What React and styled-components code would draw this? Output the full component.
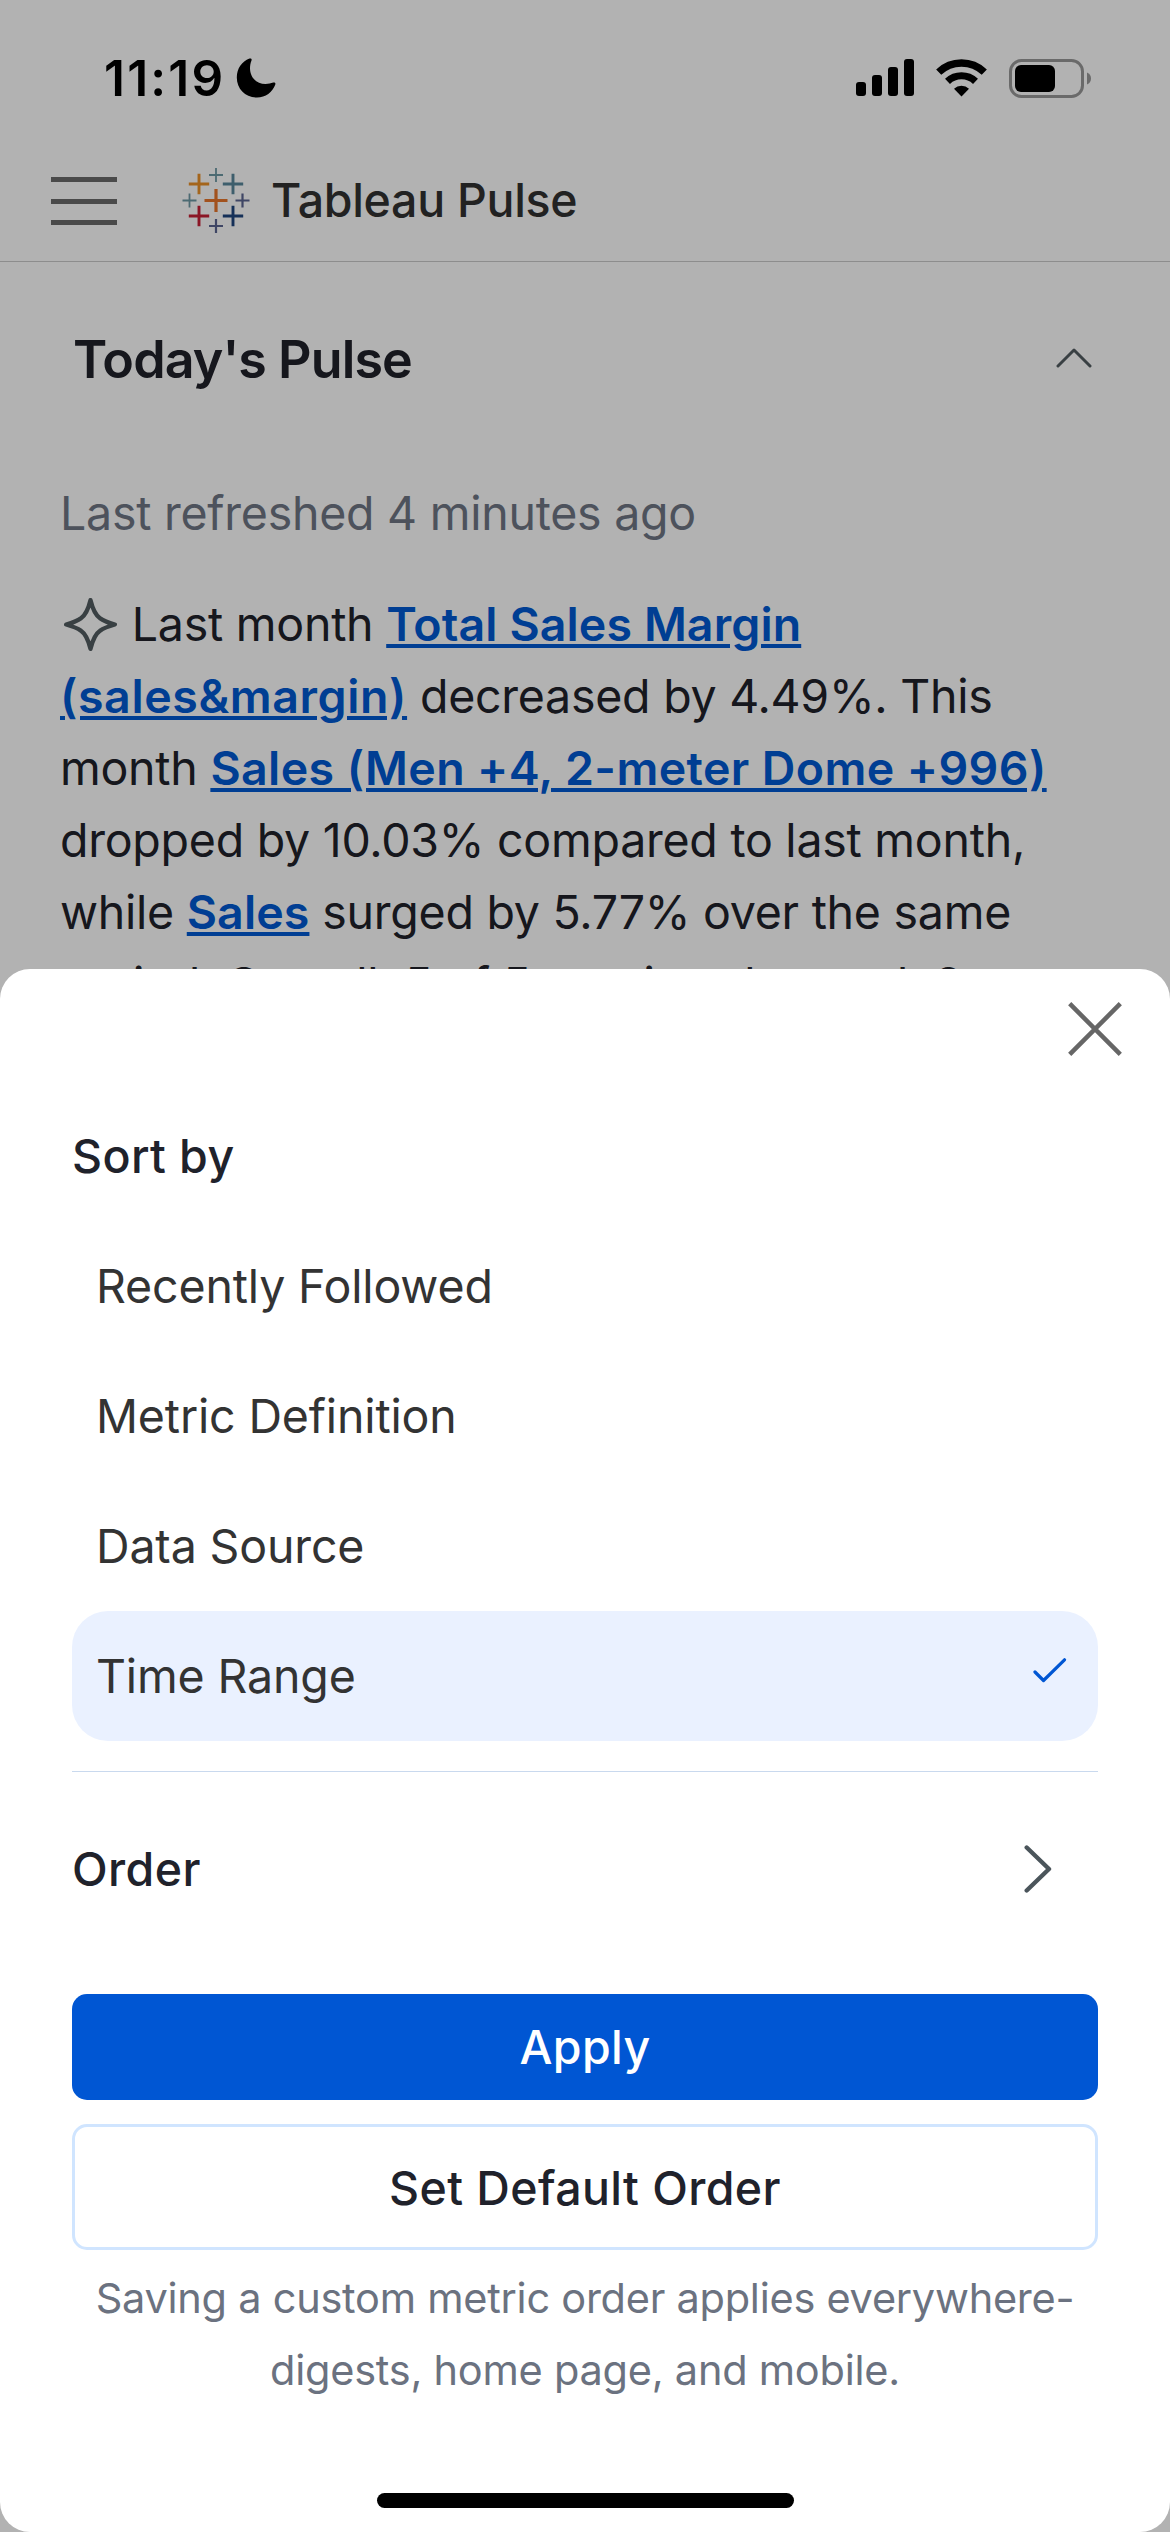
import styled, {createGlobalStyle} from 'styled-components';

const GlobalStyle = createGlobalStyle`
  * {
    box-sizing: border-box;
  }
  body {
    margin: 0;
    font-family: Inter, 'Liberation Sans', sans-serif;
  }
  h1, h2, h3, p, ul {
    margin: 0;
    padding: 0;
  }
  h1, h2, h3 {
    font-weight: 500;
  }
  button {
    font-family: inherit;
    background: transparent;
    border: none;
    padding: 0;
  }
  svg {
    display: block;
    flex-shrink: 0;
  }
`;

const Screen = styled.div`
  position: relative;
  width: 1170px;
  height: 2532px;
  overflow: hidden;
  background: #ffffff;
`;

const StatusBar = styled.div`
  height: 141px;
  padding: 15px 79px 0 104px;
  display: flex;
  align-items: center;
  justify-content: space-between;
  .time {
    display: flex;
    align-items: center;
    gap: 11px;
    font-size: 49.5px;
    font-weight: 600;
    letter-spacing: 2.2px;
    color: #000;
  }
  .indicators {
    display: flex;
    align-items: center;
    gap: 22px;
  }
`;

const TopBar = styled.header`
  height: 121px;
  padding: 0 51px;
  display: flex;
  align-items: center;
  border-bottom: 1px solid #cbcbcb;
  h1 {
    margin: 0 0 2px 21px;
    font-size: 46.5px;
    letter-spacing: -0.3px;
    color: #313131;
  }
`;

const MenuButton = styled.button`
  width: 66px;
  height: 48px;
  margin-right: 65px;
  display: flex;
  flex-direction: column;
  justify-content: space-between;
  span {
    height: 5px;
    background: #6a6a6a;
  }
`;

const PulseHeader = styled.div`
  height: 194px;
  padding: 0 78px 0 73px;
  display: flex;
  align-items: center;
  justify-content: space-between;
  h2 {
    font-size: 52px;
    font-weight: 600;
    letter-spacing: -0.9px;
    color: #20212a;
  }
  svg {
    margin-bottom: 2px;
  }
`;

const Digest = styled.section`
  padding: 21px 60px 0;
  font-size: 46.5px;
  line-height: 72px;
  letter-spacing: -0.25px;
  color: #20212a;
  .refreshed {
    margin-bottom: 39px;
    color: #6f7685;
  }
  .summary {
    white-space: nowrap;
  }
  .summary svg {
    display: inline-block;
    margin: 0 2px 0 4px;
    vertical-align: -10px;
  }
`;

const MetricLink = styled.a`
  color: #0059d3;
  font-weight: 600;
  letter-spacing: ${props => props.$spacing || '0.1px'};
  text-decoration: underline;
  text-decoration-thickness: 4px;
  text-underline-offset: 3px;
`;

const Overlay = styled.div`
  position: absolute;
  inset: 0;
  display: flex;
  align-items: flex-end;
  background: rgba(0, 0, 0, 0.3);
`;

const Sheet = styled.div`
  width: 100%;
  height: 1563px;
  padding: 33px 72px 24px;
  border-radius: 30px;
  display: flex;
  flex-direction: column;
  background: #ffffff;
`;

const CloseButton = styled.button`
  align-self: flex-end;
  margin: 0 -24px 70px 0;
`;

const SheetTitle = styled.h3`
  font-size: 46.5px;
  line-height: 60px;
  letter-spacing: 0.4px;
  color: #20222b;
`;

const SortOptions = styled.ul`
  margin-top: 35px;
  padding-bottom: 30px;
  border-bottom: 1px solid #c9d9ee;
  list-style-type: none;
`;

const SortOption = styled.li`
  height: 130px;
  padding: 0 31px 0 24px;
  border-radius: 36px;
  display: flex;
  align-items: center;
  justify-content: space-between;
  font-size: 46.5px;
  letter-spacing: -0.15px;
  color: #333333;
  background: ${props => props.$selected ? '#eaf1ff' : 'transparent'};
  svg {
    margin-bottom: 11px;
  }
`;

const OrderRow = styled.div`
  height: 222px;
  padding: 0 46px 28px 0;
  display: flex;
  align-items: center;
  justify-content: space-between;
`;

const Button = styled.button`
  flex-shrink: 0;
  height: ${props => props.$primary ? '106px' : '126px'};
  border: ${props => props.$primary ? 'none' : '3px solid #d0e5ff'};
  border-radius: 15px;
  background: ${props => props.$primary ? '#0056d3' : '#ffffff'};
  color: ${props => props.$primary ? '#ffffff' : '#20222b'};
  font-size: 46.5px;
  font-weight: 500;
  letter-spacing: 0.4px;
  & + & {
    margin-top: 24px;
    padding-top: 2px;
  }
`;

const Note = styled.p`
  margin-top: 12px;
  text-align: center;
  font-size: 41.5px;
  line-height: 72px;
  letter-spacing: -0.25px;
  color: #6b7280;
`;

const HomeIndicator = styled.div`
  width: 417px;
  height: 15px;
  margin: auto auto 0;
  border-radius: 8px;
  background: #000;
`;

// x, y, arm length, stroke width, colour
const crosses = [
  [34, 34.5, 11.5, 3.2, '#e8762c'],
  [17, 18, 10.2, 2.9, '#eb9129'],
  [51, 18, 10.2, 2.9, '#59879b'],
  [17, 50, 10.2, 2.9, '#c72035'],
  [51, 50, 10.2, 2.9, '#1f457e'],
  [34, 9, 7, 1.8, '#6d98a4'],
  [7.5, 34.5, 7, 1.8, '#6d98a4'],
  [60.5, 34.5, 7, 2.2, '#5b6591'],
  [34, 60, 7, 2.2, '#5b6591'],
];

const TableauLogo = () => (
  <svg width='68' height='70' viewBox='0 0 68 70'>
    {crosses.map(([x, y, r, w, color]) => (
      <path key={`${x}-${y}`} d={`M${x - r} ${y}H${x + r}M${x} ${y - r}V${y + r}`} stroke={color} strokeWidth={w} />
    ))}
  </svg>
);

const MoonIcon = () => (
  <svg width='40' height='40' viewBox='0 0 40 40'>
    <path d='M13.5 .6C15 .1 16.1 1 15.5 2.4C14.5 4.8 14 7.5 14 10C14 19.5 20.5 26 29.5 26C32.5 26 35 25.5 37.2 24.6C38.8 24 39.8 25 39.3 26.6C36.5 34.5 29.5 39.6 21 39.6C9.5 39.6 .8 31 .8 19.5C.8 10.8 5.8 3.5 13.5 .6Z' />
  </svg>
);

const SignalIcon = () => (
  <svg width='58' height='38' viewBox='0 0 58 38'>
    <rect x='0' y='23' width='10' height='14' rx='3' />
    <rect x='16' y='16' width='10' height='21' rx='3' />
    <rect x='32' y='8' width='10' height='29' rx='3' />
    <rect x='48' y='0' width='10' height='37' rx='3' />
  </svg>
);

const WifiIcon = () => (
  <svg width='51' height='38' viewBox='0 0 51 38'>
    <path d='M2.7 13.2A33 33 0 0 1 48.3 13.2' fill='none' stroke='#000' strokeWidth='7.4' />
    <path d='M11.5 22.3A20.5 20.5 0 0 1 39.5 22.3' fill='none' stroke='#000' strokeWidth='7.2' />
    <path d='M25.5 37.5L18 29.8A11 11 0 0 1 33 29.8Z' />
  </svg>
);

const BatteryIcon = () => (
  <svg width='82' height='39' viewBox='0 0 82 39'>
    <rect x='1.5' y='1.5' width='72' height='36' rx='11' fill='none' stroke='#999' strokeWidth='3' />
    <rect x='6' y='6' width='40' height='27' rx='6' />
    <path d='M78 13.5C80.5 14.5 82 16.8 82 19.5S80.5 24.5 78 25.5Z' fill='#999' />
  </svg>
);

const SparkleIcon = () => (
  <svg width='53' height='53' viewBox='0 0 53 53' fill='none' stroke='#525c60' strokeWidth='4.4' strokeLinejoin='round'>
    <path d='M26.5 2.2C29.2 13 33.5 18.5 36 20.2C39.5 22.8 44 24.6 50.8 26.5C44 28.4 39.5 30.2 36 32.8C33.5 34.5 29.2 40 26.5 50.8C23.8 40 19.5 34.5 17 32.8C13.5 30.2 9 28.4 2.2 26.5C9 24.6 13.5 22.8 17 20.2C19.5 18.5 23.8 13 26.5 2.2Z' />
  </svg>
);

const sortOptions = ['Recently Followed', 'Metric Definition', 'Data Source', 'Time Range'];

const App = () => {
  const selected = 'Time Range';

  return (
    <Screen>
      <GlobalStyle />
      <StatusBar>
        <div className='time'>
          <span>11:19</span>
          <MoonIcon />
        </div>
        <div className='indicators'>
          <SignalIcon />
          <WifiIcon />
          <BatteryIcon />
        </div>
      </StatusBar>
      <TopBar>
        <MenuButton>
          <span />
          <span />
          <span />
        </MenuButton>
        <TableauLogo />
        <h1>Tableau Pulse</h1>
      </TopBar>
      <PulseHeader>
        <h2>Today's Pulse</h2>
        <svg width='36' height='20' viewBox='0 0 36 20' fill='none' stroke='#525c60' strokeWidth='3' strokeLinecap='round' strokeLinejoin='round'>
          <path d='M2 18L18 2L34 18' />
        </svg>
      </PulseHeader>
      <Digest>
        <p className='refreshed'>Last refreshed 4 minutes ago</p>
        <p className='summary'>
          <SparkleIcon /> Last month <MetricLink>Total Sales Margin</MetricLink><br />
          <MetricLink $spacing='0.6px'>(sales&amp;margin)</MetricLink> decreased by 4.49%. This<br />
          month <MetricLink $spacing='0.4px'>Sales (Men +4, 2-meter Dome +996)</MetricLink><br />
          dropped by 10.03% compared to last month,<br />
          while <MetricLink>Sales</MetricLink> surged by 5.77% over the same<br />
          period. Overall, 5 of 5 metrics changed, 3
        </p>
      </Digest>
      <Overlay>
        <Sheet>
          <CloseButton>
            <svg width='54' height='54' viewBox='0 0 54 54' stroke='#666666' strokeWidth='4.5'>
              <path d='M1.7 1.7L52.3 52.3M52.3 1.7L1.7 52.3' />
            </svg>
          </CloseButton>
          <SheetTitle>Sort by</SheetTitle>
          <SortOptions>
            {sortOptions.map(option => (
              <SortOption key={option} $selected={option === selected}>
                {option}
                {option === selected && (
                  <svg width='34' height='25' viewBox='0 0 34 25' fill='none' stroke='#0056d3' strokeWidth='3.2' strokeLinecap='round' strokeLinejoin='round'>
                    <path d='M2 14L10.5 22.5L31.5 1.8' />
                  </svg>
                )}
              </SortOption>
            ))}
          </SortOptions>
          <OrderRow>
            <SheetTitle>Order</SheetTitle>
            <svg width='28' height='48' viewBox='0 0 28 48' fill='none' stroke='#4b555b' strokeWidth='4.4' strokeLinecap='round' strokeLinejoin='round'>
              <path d='M2.7 2.5L25 24L2.7 45.5' />
            </svg>
          </OrderRow>
          <Button $primary>Apply</Button>
          <Button>Set Default Order</Button>
          <Note>Saving a custom metric order applies everywhere-<br />digests, home page, and mobile.</Note>
          <HomeIndicator />
        </Sheet>
      </Overlay>
    </Screen>
  );
};

export default App;
